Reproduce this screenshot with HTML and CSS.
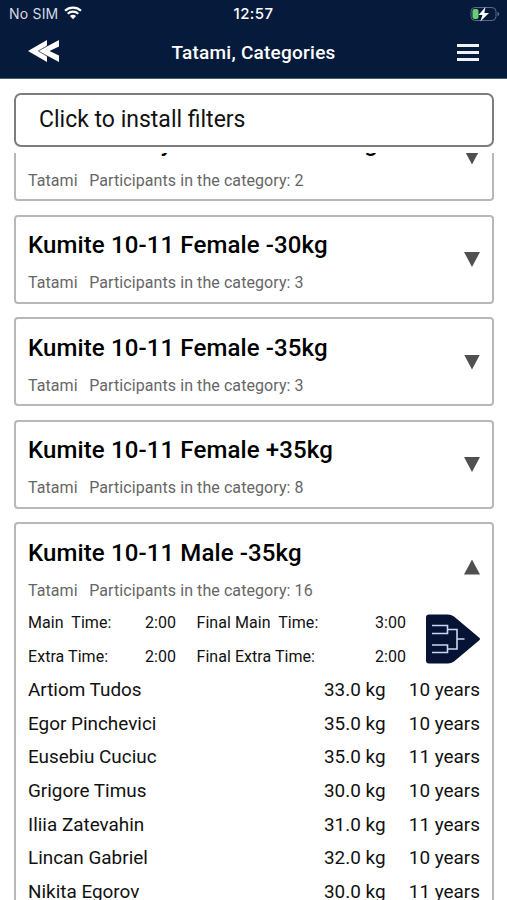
FILE: index.html
```
<!DOCTYPE html>
<html lang="en">

<head>
  <meta charset="UTF-8">
  <meta name="viewport" content="width=device-width, initial-scale=1.0">
  <title>Tatami, Categories</title>
  <link rel="stylesheet" href="styles.css">
</head>

<body>
  <header>
    <div class="status">
      <div class="carrier">
        <span>No SIM</span>
        <svg width="18" height="14" viewBox="0 0 18 14">
          <path d="M1 4.8C5.5.6 12.5.6 17 4.8M3.7 7.8c3-2.8 7.6-2.8 10.6 0" fill="none" stroke="#fff" stroke-width="2.2" />
          <path d="M5.9 10c1.8-1.6 4.4-1.6 6.2 0L9 13.2z" fill="#fff" />
        </svg>
      </div>
      <span class="clock">12:57</span>
      <svg class="battery" width="30" height="16" viewBox="0 0 30 16">
        <rect x="1" y="1.5" width="25" height="13" rx="4" fill="none" stroke="#5d6a80" />
        <path d="M27.5 6v4c1.3-.4 1.8-1.2 1.8-2s-.5-1.6-1.8-2z" fill="#5d6a80" />
        <rect x="2.5" y="3" width="6" height="10" rx="2" fill="#66cf70" />
        <path d="M15.5 1L8.5 9h4l-2.2 6.5L19 7h-4.7z" fill="#fff" />
      </svg>
    </div>
    <nav>
      <svg class="back" width="32" height="24" viewBox="0 0 32 24">
        <path d="M0 12L19 1v6l-8 5 8 5v6z" fill="#fff" />
        <path d="M10.5 12L31 1v6.500L21.500 12l9.500 4.500V23z" fill="#fff" />
        <path d="M19 6.8L10.3 12l8.7 5.2" fill="none" stroke="#4a566c" stroke-width=".8" />
      </svg>
      <h1>Tatami, Categories</h1>
      <div class="menu"><i></i><i></i><i></i></div>
    </nav>
  </header>

  <div class="filters">Click to install filters</div>

  <main>
    <section class="card">
      <h2>Kumite 8-10years Female +30kg</h2>
      <p class="info"><span>Tatami</span><span>Participants in the category: 2</span></p>
      <i class="arrow"></i>
    </section>
    <section class="card">
      <h2>Kumite 10-11 Female -30kg</h2>
      <p class="info"><span>Tatami</span><span>Participants in the category: 3</span></p>
      <i class="arrow"></i>
    </section>
    <section class="card">
      <h2>Kumite 10-11 Female -35kg</h2>
      <p class="info"><span>Tatami</span><span>Participants in the category: 3</span></p>
      <i class="arrow"></i>
    </section>
    <section class="card">
      <h2>Kumite 10-11 Female +35kg</h2>
      <p class="info"><span>Tatami</span><span>Participants in the category: 8</span></p>
      <i class="arrow"></i>
    </section>
    <section class="card open">
      <h2>Kumite 10-11 Male -35kg</h2>
      <p class="info"><span>Tatami</span><span>Participants in the category: 16</span></p>
      <i class="arrow up"></i>
      <div class="details">
        <div class="times">
          <span>Main&nbsp; Time:</span><span>2:00</span><span>Final Main&nbsp; Time:</span><span>3:00</span>
          <span>Extra Time:</span><span>2:00</span><span>Final Extra Time:</span><span>2:00</span>
        </div>
        <svg width="54" height="50" viewBox="0 0 54 50">
          <path d="M3 .5h19q3 0 6 2L53 23.5q2 1.5 0 3L28 47.5q-3 2-6 2H3q-3 0-3-3v-43q0-3 3-3z" fill="#071334" />
          <path d="M6 11.5h15.5v8H6M6 31h15.5v7.5H6M21.5 15.5h9.5v19.5h-9.5M31 25h7.5" fill="none" stroke="#ccd6f2" stroke-width="1.6" />
        </svg>
      </div>
      <ul>
        <li><span>Artiom Tudos</span><span>33.0 kg</span><span>10 years</span></li>
        <li><span>Egor Pinchevici</span><span>35.0 kg</span><span>10 years</span></li>
        <li><span>Eusebiu Cuciuc</span><span>35.0 kg</span><span>11 years</span></li>
        <li><span>Grigore Timus</span><span>30.0 kg</span><span>10 years</span></li>
        <li><span>Iliia Zatevahin</span><span>31.0 kg</span><span>11 years</span></li>
        <li><span>Lincan Gabriel</span><span>32.0 kg</span><span>10 years</span></li>
        <li><span>Nikita Egorov</span><span>30.0 kg</span><span>11 years</span></li>
      </ul>
    </section>
  </main>
</body>

</html>
```
FILE: styles.css
```
* {
  padding: 0;
  margin: 0;
  box-sizing: border-box;
}

body {
  height: 100vh;
  display: flex;
  flex-direction: column;
  overflow: hidden;
  background: #fff;
  color: #111;
  font-family: Roboto, sans-serif;
}

header {
  height: 79px;
  flex: none;
  background: #061b3b;
  border-bottom: solid 1px #4c5b75;
  color: #fff;
}

.status {
  height: 27px;
  padding: 0 7px 0 9px;
  display: grid;
  grid-template-columns: 1fr auto 1fr;
  align-items: center;
  font-size: 15px;
}

.carrier {
  display: flex;
  align-items: center;
  gap: 6px;
  color: #d5dae3;
  font-family: Inter, sans-serif;
  font-size: 14px;
  letter-spacing: 0.2px;
}

.carrier svg {
  margin-top: -2px;
}

.clock {
  margin-left: -2px;
  font-family: Inter, sans-serif;
  font-weight: 500;
  letter-spacing: 0.4px;
}

.battery {
  justify-self: end;
}

nav {
  height: 50px;
  padding: 0 28px;
  display: grid;
  grid-template-columns: 1fr auto 1fr;
  align-items: center;
}

.back {
  margin-top: -2px;
}

h1 {
  padding-top: 1px;
  font-size: 19px;
  font-weight: 500;
  line-height: 24px;
  letter-spacing: 0.25px;
}

.menu {
  width: 22px;
  display: flex;
  flex-direction: column;
  gap: 4px;
  justify-self: end;
}

.menu i {
  height: 3px;
  background: #eef1f6;
}

.filters {
  height: 54px;
  flex: none;
  margin: 14px 13px 6px 14px;
  padding-left: 23px;
  border: solid 2px #7d7d7d;
  border-radius: 7px;
  font-size: 23px;
  line-height: 50px;
}

main {
  flex: 1;
  overflow: hidden;
  padding: 0 13px 0 14px;
}

.card {
  position: relative;
  height: 89px;
  margin-bottom: 13.5px;
  padding: 14.5px 12px 0;
  border: solid 2px #b8b8b8;
  border-radius: 4px;
}

.card:first-child {
  margin-top: -41px;
}

h2 {
  color: #000;
  font-size: 24px;
  font-weight: 500;
  line-height: 28px;
  letter-spacing: 0.12px;
}

.info {
  margin-top: 14px;
  display: flex;
  gap: 11.5px;
  color: #666;
  font-size: 16px;
  line-height: 20px;
  letter-spacing: 0.08px;
}

.arrow {
  position: absolute;
  right: 12px;
  top: 35.5px;
  width: 16px;
  height: 15px;
  background: #505050;
  clip-path: polygon(0 0, 100% 0, 50% 100%);
}

.up {
  clip-path: polygon(50% 0, 100% 100%, 0 100%);
}

.open {
  height: 700px;
}

.details {
  margin-top: 4.8px;
  display: flex;
  justify-content: space-between;
  align-items: center;
}

.times {
  display: grid;
  grid-template-columns: 98px 50px 140px 90px;
  grid-auto-rows: 34px;
  align-items: center;
  font-size: 16px;
  letter-spacing: 0.05px;
}

.times span:nth-child(even) {
  text-align: right;
}

.times span:nth-child(4n + 3) {
  margin-left: 20.5px;
  white-space: nowrap;
}

ul {
  margin-top: -0.8px;
  list-style: none;
}

li {
  height: 33.7px;
  display: grid;
  grid-template-columns: 1fr auto 94.5px;
  align-items: center;
  font-size: 18.9px;
}

li span:last-child {
  text-align: right;
}
```
